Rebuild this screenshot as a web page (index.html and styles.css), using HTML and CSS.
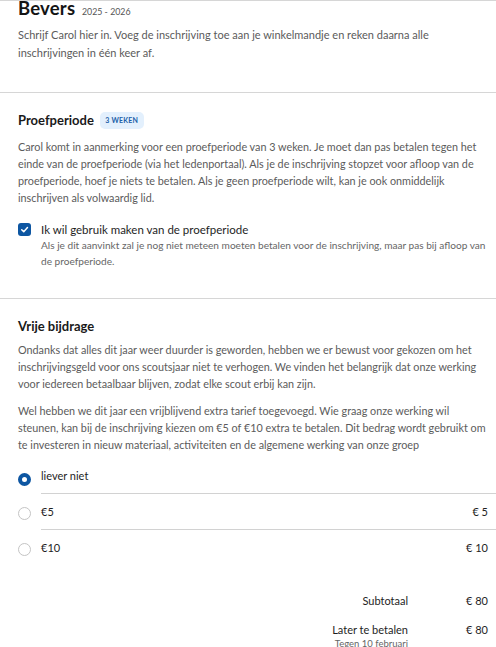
FILE: index.html
```html
<!DOCTYPE html>
<html lang="nl">
<head>
<meta charset="utf-8">
<title>Bevers</title>
<link rel="stylesheet" href="styles.css">
</head>
<body>
<main class="page">
  <section class="intro">
    <h1 class="title">Bevers <span class="year">2025 - 2026</span></h1>
    <p class="text">Schrijf Carol hier in. Voeg de inschrijving toe aan je winkelmandje en reken daarna alle inschrijvingen in één keer af.</p>
  </section>

  <section class="block">
    <h2 class="heading">Proefperiode <span class="badge">3 weken</span></h2>
    <p class="text">Carol komt in aanmerking voor een proefperiode van 3 weken. Je moet dan pas betalen tegen het einde van de proefperiode (via het ledenportaal). Als je de inschrijving stopzet voor afloop van de proefperiode, hoef je niets te betalen. Als je geen proefperiode wilt, kan je ook onmiddelijk inschrijven als volwaardig lid.</p>
    <label class="check">
      <span class="checkbox"><svg viewBox="0 0 14 14" width="14" height="14"><path d="M4 7.2 L6.2 9.3 L10.2 4.9" fill="none" stroke="#fff" stroke-width="1.6" stroke-linecap="round" stroke-linejoin="round"/></svg></span>
      <span class="check-body">
        <span class="check-label">Ik wil gebruik maken van de proefperiode</span>
        <span class="check-sub">Als je dit aanvinkt zal je nog niet meteen moeten betalen voor de inschrijving, maar pas bij afloop van de proefperiode.</span>
      </span>
    </label>
  </section>

  <section class="block block-last">
    <h2 class="heading">Vrije bijdrage</h2>
    <p class="text">Ondanks dat alles dit jaar weer duurder is geworden, hebben we er bewust voor gekozen om het inschrijvingsgeld voor ons scoutsjaar niet te verhogen. We vinden het belangrijk dat onze werking voor iedereen betaalbaar blijven, zodat elke scout erbij kan zijn.</p>
    <p class="text">Wel hebben we dit jaar een vrijblijvend extra tarief toegevoegd. Wie graag onze werking wil<br>steunen, kan bij de inschrijving kiezen om €5 of €10 extra te betalen. Dit bedrag wordt gebruikt om te investeren in nieuw materiaal, activiteiten en de algemene werking van onze groep</p>

    <ul class="options">
      <li class="option">
        <span class="radio radio-on"></span>
        <span class="option-body"><span>liever niet</span></span>
      </li>
      <li class="option">
        <span class="radio"></span>
        <span class="option-body"><span>€5</span><span class="price">€ 5</span></span>
      </li>
      <li class="option">
        <span class="radio"></span>
        <span class="option-body"><span>€10</span><span class="price">€ 10</span></span>
      </li>
    </ul>
  </section>

  <div class="summary">
    <div class="sum-label">Subtotaal</div>
    <div class="sum-value">€ 80</div>
    <div class="sum-label">Later te betalen<span class="sum-sub">Tegen 10 februari</span></div>
    <div class="sum-value">€ 80</div>
  </div>
</main>
</body>
</html>
```

FILE: styles.css
```css
* { box-sizing: border-box; }
html, body { margin: 0; padding: 0; background: #fff; }
body {
  font-family: Lato, "Noto Sans", sans-serif;
  color: #1d1d1f;
  overflow: hidden;
}
.page {
  border-top: 1px solid #d6d6d6;
}
.intro {
  padding: 0 16px 30px 18px;
  border-bottom: 1px solid #d6d6d6;
}
.title {
  margin: -3px 0 0;
  font-size: 18.5px;
  line-height: 20px;
  font-weight: 700;
  color: #141414;
  letter-spacing: 0.2px;
}
.year {
  font-size: 8.8px;
  line-height: 10px;
  font-weight: 400;
  color: #555;
  letter-spacing: 0;
  margin-left: 2px;
}
.text {
  margin: 0;
  font-size: 10.8px;
  line-height: 17px;
  color: #5b5b5b;
}
.intro .text { margin-top: 8px; line-height: 18px; font-size: 11px; }
.block {
  padding: 16px 8px 29px 18px;
  border-bottom: 1px solid #d6d6d6;
}
.block-last { border-bottom: none; padding-right: 0; padding-bottom: 0; }
.block-last .text { padding-right: 8px; }
.heading {
  margin: 0 0 7px;
  display: flex;
  align-items: center;
  gap: 6px;
  font-size: 13px;
  line-height: 22px;
  font-weight: 700;
  color: #1a1a1a;
}
.block-last .heading { margin-bottom: 4px; }
.badge {
  display: inline-block;
  background: #e3f0fd;
  color: #1c5fa8;
  font-size: 7px;
  font-weight: 700;
  text-transform: uppercase;
  letter-spacing: 0.2px;
  line-height: 17px;
  padding: 0 5.5px;
  border-radius: 5px;
}
.block .text + .text { margin-top: 10px; }
.check {
  display: flex;
  gap: 10px;
  margin-top: 16px;
}
.checkbox {
  flex: none;
  width: 13px;
  height: 13px;
  margin-top: 1px;
  border-radius: 3px;
  background: #0d56a2;
  display: flex;
  align-items: center;
  justify-content: center;
}
.checkbox svg { width: 13px; height: 13px; }
.check-body { display: flex; flex-direction: column; }
.check-label {
  font-size: 11.5px;
  line-height: 15px;
  color: #1e1e1e;
}
.check-sub {
  font-size: 10.1px;
  line-height: 16px;
  color: #666;
}
.options {
  list-style: none;
  margin: 7px 0 0;
  padding: 0;
}
.option {
  display: flex;
  align-items: flex-start;
  gap: 10px;
}
.radio {
  flex: none;
  width: 13px;
  height: 13px;
  margin-top: 13px;
  border-radius: 50%;
  border: 1px solid #c4c4c4;
  background: #fff;
}
.radio-on {
  border: 4px solid #0d56a2;
}
.option-body {
  flex: 1;
  display: flex;
  justify-content: space-between;
  padding: 11px 8px 10px 0;
  font-size: 11px;
  line-height: 14px;
  color: #1e1e1e;
  border-bottom: 1px solid #d2d2d2;
}
.option:first-child .option-body { padding-top: 9px; }
.option:last-child .option-body { border-bottom: none; }
.summary {
  display: grid;
  grid-template-columns: auto 80px;
  justify-content: end;
  row-gap: 15px;
  padding: 29px 8px 0 0;
  font-size: 11px;
  line-height: 14px;
  color: #1e1e1e;
}
.sum-label {
  text-align: right;
  font-weight: 400;
  display: flex;
  flex-direction: column;
  align-items: flex-end;
}
.sum-value { text-align: right; }
.sum-sub {
  font-size: 9.5px;
  line-height: 13px;
  font-weight: 400;
  color: #666;
}
```
